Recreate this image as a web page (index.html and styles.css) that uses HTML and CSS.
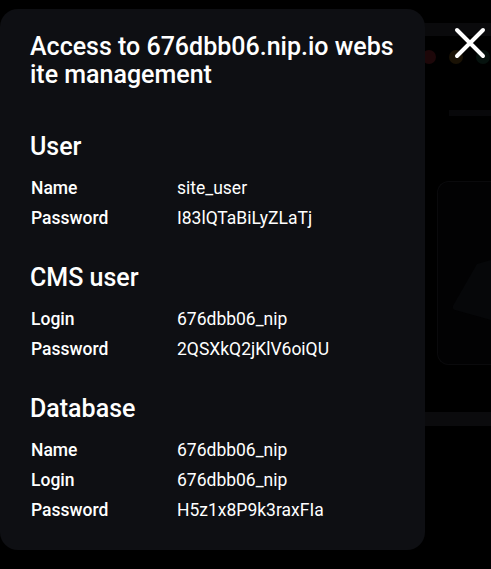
FILE: index.html
```html
<!DOCTYPE html>
<html lang="en">
<head>
<meta charset="utf-8">
<title>Site access</title>
<link rel="stylesheet" href="styles.css">
</head>
<body>
<div class="page" aria-hidden="true">
  <div class="topbar"></div>
  <div class="dots"><span class="dot red"></span><span class="dot yellow"></span><span class="dot green"></span></div>
  <div class="thinline"></div>
  <div class="card">
    <svg class="card-shape" width="40" height="60" viewBox="0 0 40 60"><path d="M26 4 L40 0 L40 60 L4 50 Q0 48 3 44 Z" fill="#060709"/></svg>
  </div>
  <div class="band"></div>
</div>

<div class="modal">
  <h1 class="title">Access to 676dbb06.nip.io website management</h1>

  <section class="section">
    <h2 class="heading">User</h2>
    <dl class="rows">
      <dt>Name</dt><dd>site_user</dd>
      <dt>Password</dt><dd>I83lQTaBiLyZLaTj</dd>
    </dl>
  </section>

  <section class="section">
    <h2 class="heading">CMS user</h2>
    <dl class="rows">
      <dt>Login</dt><dd>676dbb06_nip</dd>
      <dt>Password</dt><dd>2QSXkQ2jKlV6oiQU</dd>
    </dl>
  </section>

  <section class="section">
    <h2 class="heading">Database</h2>
    <dl class="rows">
      <dt>Name</dt><dd>676dbb06_nip</dd>
      <dt>Login</dt><dd>676dbb06_nip</dd>
      <dt>Password</dt><dd>H5z1x8P9k3raxFIa</dd>
    </dl>
  </section>
</div>

<button class="close" aria-label="Close">
  <svg width="34" height="32" viewBox="0 0 34 32"><path d="M4 3 L30 29 M30 3 L4 29" stroke="#fff" stroke-width="4" stroke-linecap="round" fill="none"/></svg>
</button>
</body>
</html>
```
FILE: styles.css
```css
html, body {
  margin: 0;
  padding: 0;
  background: #000;
}
body {
  width: 491px;
  height: 569px;
  overflow: hidden;
  position: relative;
  font-family: Roboto, "Noto Sans", Arial, sans-serif;
  color: #fff;
}

/* faint page behind the dialog */
.page {
  padding-top: 23px;
}
.topbar {
  height: 13px;
  margin-left: 40px;
  background: #0a0a0c;
}
.dots {
  display: flex;
  gap: 13px;
  padding-left: 422px;
  margin-top: 14px;
}
.dot {
  width: 14px;
  height: 14px;
  border-radius: 50%;
}
.red { background: #1d0709; }
.yellow { background: #1a1205; }
.green { background: #06120e; }
.thinline {
  margin: 46px 0 0 449px;
  height: 6px;
  background: #08080a;
}
.card {
  margin: 65px 0 0 437px;
  height: 184px;
  border: 1px solid #0a0a0c;
  border-right: none;
  border-radius: 12px 0 0 12px;
  background: #020203;
  display: flex;
  justify-content: flex-end;
  align-items: flex-end;
  padding-bottom: 44px;
  box-sizing: border-box;
}
.band {
  margin-top: 47px;
  margin-left: 40px;
  height: 14px;
  background: #0b0b0d;
}

/* dialog */
.modal {
  position: absolute;
  left: 0;
  top: 9px;
  width: 425px;
  height: 541px;
  box-sizing: border-box;
  padding: 24px 30px 24px 30px;
  background: #0e0f13;
  border-radius: 18px;
}
.title {
  margin: 0 0 44px;
  font-size: 25px;
  line-height: 28px;
  font-weight: 500;
  word-break: break-all;
}
.section + .section {
  margin-top: 31px;
}
.heading {
  margin: 0 0 12px;
  font-size: 25px;
  line-height: 28px;
  font-weight: 500;
}
.rows {
  display: grid;
  grid-template-columns: 147px 1fr;
  margin: 0;
  font-size: 17.5px;
  line-height: 30px;
}
.rows dt {
  padding-left: 1px;
  font-weight: 500;
}
.rows dd {
  margin: 0;
  font-weight: 400;
}

.close {
  position: absolute;
  left: 453px;
  top: 27px;
  padding: 0;
  border: 0;
  background: none;
  line-height: 0;
  cursor: pointer;
}
```
